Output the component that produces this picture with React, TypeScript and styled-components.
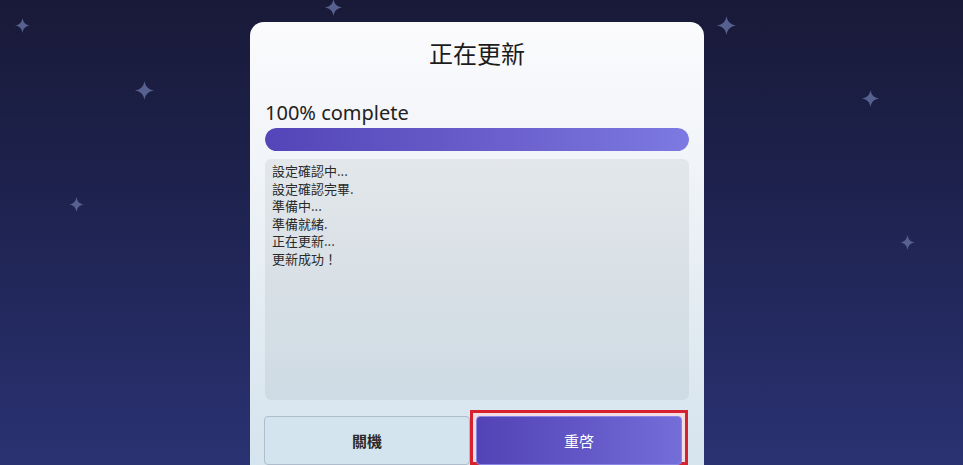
import React from 'react';
import styled, { createGlobalStyle } from 'styled-components';

const GlobalStyle = createGlobalStyle`
  html, body {
    margin: 0;
    padding: 0;
  }
  body {
    font-family: "Noto Sans", "Noto Sans CJK TC", sans-serif;
    background: #1a1c3a;
  }
`;

const logLines = [
  '設定確認中...',
  '設定確認完畢.',
  '準備中...',
  '準備就緒.',
  '正在更新...',
  '更新成功！',
];

const stars = [
  { x: 22, y: 25, size: 15 },
  { x: 144, y: 90, size: 19 },
  { x: 76, y: 204, size: 15 },
  { x: 333, y: 7, size: 17 },
  { x: 726, y: 25, size: 19 },
  { x: 870, y: 98, size: 17 },
  { x: 907, y: 242, size: 15 },
];

const Screen = styled.div`
  position: relative;
  width: 963px;
  height: 465px;
  overflow: hidden;
  background: linear-gradient(180deg, #191a38 0%, #1e2350 45%, #2a3272 100%);
`;

const StarLayer = styled.div`
  position: absolute;
  inset: 0;
  pointer-events: none;
`;

const StarIcon = styled.svg`
  position: absolute;
  fill: #57618f;
  filter: blur(0.4px);
`;

const Card = styled.section`
  position: relative;
  margin: 22px 0 0 250px;
  width: 454px;
  height: 470px;
  box-sizing: border-box;
  padding-top: 16px;
  border-radius: 14px;
  background: linear-gradient(180deg, #fbfbfd 0%, #f1f4f8 30%, #dde8f0 75%, #d4e3ee 100%);
  display: flex;
  flex-direction: column;
`;

const Title = styled.h1`
  margin: 0;
  text-align: center;
  font-family: "Noto Sans CJK TC", sans-serif;
  font-size: 24px;
  font-weight: 400;
  line-height: 30px;
  color: #1c1c1c;
`;

const Body = styled.div`
  padding: 0 15px;
  display: flex;
  flex-direction: column;
`;

const ProgressLabel = styled.div`
  margin-top: 33px;
  font-family: "Noto Sans", sans-serif;
  font-size: 20px;
  line-height: 24px;
  color: #222;
`;

const ProgressTrack = styled.div`
  margin-top: 3px;
  height: 23px;
  border-radius: 12px;
  background: #d8dce8;
  overflow: hidden;
`;

const ProgressFill = styled.div`
  height: 100%;
  border-radius: 12px;
  background: linear-gradient(90deg, #5445b8 0%, #6a5fcc 55%, #7d7ae2 100%);
`;

const LogBox = styled.div`
  margin-top: 8px;
  height: 241px;
  box-sizing: border-box;
  padding: 3px 7px;
  border-radius: 6px;
  background: linear-gradient(180deg, #e3e7ea 0%, #d8e0e6 50%, #cedbe4 100%);
`;

const LogLine = styled.div`
  font-family: "Noto Sans CJK TC", sans-serif;
  font-size: 13px;
  line-height: 17.6px;
  color: #2a2a2a;
`;

const ButtonRow = styled.div`
  margin-top: 10px;
  padding: 0 16px 0 14px;
  display: flex;
  align-items: flex-end;
`;

const Button = styled.button<{ $primary?: boolean }>`
  height: 49px;
  box-sizing: border-box;
  border-radius: 4px;
  font-family: "Noto Sans CJK TC", sans-serif;
  font-size: 15px;
  font-weight: ${(p) => (p.$primary ? 400 : 700)};
  cursor: pointer;
  color: ${(p) => (p.$primary ? '#ffffff' : '#2a2a2a')};
  border: 1px solid ${(p) => (p.$primary ? '#8a86e6' : '#aebccb')};
  background: ${(p) =>
    p.$primary
      ? 'linear-gradient(90deg, #5343b6 0%, #6256c6 50%, #746ed8 100%)'
      : '#d4e4ef'};
`;

const LeftButton = styled(Button)`
  width: 206px;
`;

const Highlight = styled.div`
  width: 218px;
  height: 55px;
  box-sizing: border-box;
  border: 3px solid #d6222e;
  padding: 3px 3px 0 3px;
  background: #f4dde2;
  display: flex;
`;

const PrimaryButton = styled(Button)`
  flex: 1;
  height: 49px;
`;

const Star = ({ x, y, size }: { x: number; y: number; size: number }) => (
  <StarIcon
    viewBox="0 0 20 20"
    width={size}
    height={size}
    style={{ left: x - size / 2, top: y - size / 2 }}
  >
    <path d="M10 0 C11 6 14 9 20 10 C14 11 11 14 10 20 C9 14 6 11 0 10 C6 9 9 6 10 0 Z" />
  </StarIcon>
);

const App = () => {
  return (
    <Screen>
      <GlobalStyle />
      <StarLayer>
        {stars.map((s, i) => (
          <Star key={i} {...s} />
        ))}
      </StarLayer>
      <Card>
        <Title>正在更新</Title>
        <Body>
          <ProgressLabel>100% complete</ProgressLabel>
          <ProgressTrack>
            <ProgressFill style={{ width: '100%' }} />
          </ProgressTrack>
          <LogBox>
            {logLines.map((line) => (
              <LogLine key={line}>{line}</LogLine>
            ))}
          </LogBox>
        </Body>
        <ButtonRow>
          <LeftButton>關機</LeftButton>
          <Highlight>
            <PrimaryButton $primary>重啓</PrimaryButton>
          </Highlight>
        </ButtonRow>
      </Card>
    </Screen>
  );
};

export default App;
